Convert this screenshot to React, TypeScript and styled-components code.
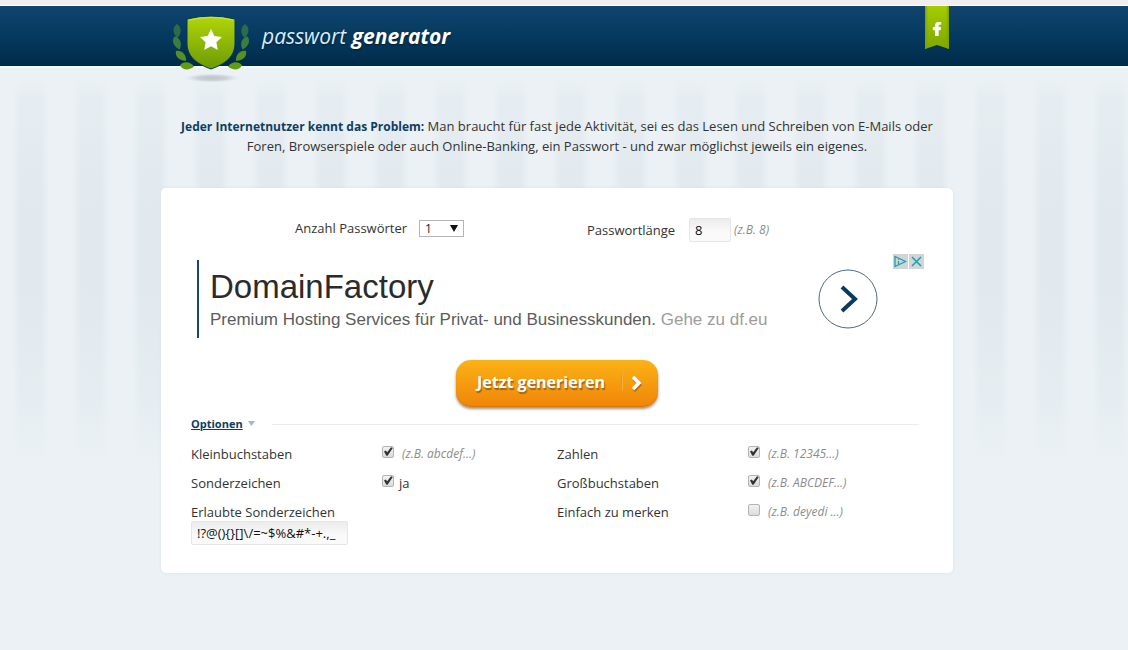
import React from "react";
import styled, { createGlobalStyle } from "styled-components";
import { FaFacebookF } from "react-icons/fa";

const bodyFont = `"Open Sans", "Noto Sans", sans-serif`;

const GlobalStyle = createGlobalStyle`
  * { box-sizing: border-box; }
  body {
    margin: 0;
    min-height: 100vh;
    background: #ebf1f5;
    color: #333;
    font: 13px/20px ${bodyFont};
  }
`;

const Page = styled.div`
  border-top: 5px solid #f0eeee;
`;

const Header = styled.header`
  height: 63px;
  padding-right: 14px;
  border-top: 1px solid #fff;
  border-bottom: 2px solid #f4f9fc;
  background: linear-gradient(#10446f, #053a60 50%, #002a48) padding-box;
`;

const HeaderInner = styled.div`
  display: flex;
  align-items: flex-start;
  justify-content: space-between;
  max-width: 792px;
  margin: 0 auto;
  padding: 0 4px 0 11px;
`;

const Brand = styled.a`
  display: flex;
  gap: 12px;
  color: #d8eefb;
  font-size: 21px;
  font-style: italic;
  line-height: 60px;
  text-decoration: none;
  text-shadow: 0 1px 2px #001b30;

  svg { margin-top: 8px; }
  b { color: #fff; }
`;

const Ribbon = styled.a`
  display: flex;
  justify-content: center;
  width: 24px;
  height: 43px;
  padding-top: 16px;
  color: #fff;
  background: linear-gradient(90deg, #7aa300, transparent 3px 21px, #7aa300),
    linear-gradient(#a5cc00, #7ea600);
  clip-path: polygon(0 0, 100% 0, 100% 100%, 50% 39px, 0 100%);
`;

const Main = styled.main`
  padding: 48px 14px 76px 0;
  background:
    linear-gradient(#ebf1f5 10px, #ebf1f580 30px, #ebf1f500 140px 220px, #ebf1f580 330px, #ebf1f5 400px),
    repeating-linear-gradient(90deg, #ebf1f5 0 12px, #e1e9ee 21px 41px, #ebf1f5 49px 60px);
`;

const Intro = styled.p`
  max-width: 792px;
  margin: 0 auto 32px;
  padding: 0 16px;
  text-align: center;

  strong {
    color: #0e3d63;
    font-size: 12px;
    line-height: 16px;
  }
`;

const Card = styled.form`
  max-width: 792px;
  margin: 0 auto;
  padding: 30px 30px 28px;
  border-radius: 5px;
  background: #fff;
  box-shadow: 0 0 3px #d9e3e8;
`;

const Settings = styled.div`
  display: grid;
  grid-template-columns: 292px auto;
  align-items: start;
  padding-left: 104px;
`;

const Setting = styled.div<{ $labelWidth: number }>`
  display: flex;
  align-items: center;

  label { flex: 0 0 ${(p) => p.$labelWidth}px; }
`;

const SelectBox = styled.span`
  position: relative;
  display: flex;

  svg {
    position: absolute;
    top: 5px;
    right: 6px;
    pointer-events: none;
  }
`;

const Select = styled.select`
  appearance: none;
  width: 45px;
  height: 17px;
  padding: 0 5px;
  border: 1px solid #b5b5b5;
  border-radius: 0;
  background: #fff;
  color: #222;
  font: 12px/15px ${bodyFont};
`;

const TextInput = styled.input<{ $width: number }>`
  width: ${(p) => p.$width}px;
  height: 24px;
  padding: 0 5px;
  border: 1px solid #e6e6e6;
  border-radius: 2px;
  background: linear-gradient(#ececec, #fafafa 60%);
  color: #111;
  font: 13px/20px ${bodyFont};
`;

const Hint = styled.span`
  padding-left: 3px;
  color: #8c8c8c;
  font-size: 12px;
  font-style: italic;
`;

const Ad = styled.section`
  display: flex;
  align-items: flex-start;
  margin: 12px -1px 22px 6px;
  font-family: "Liberation Sans", Arial, sans-serif;
`;

const AdLink = styled.a`
  display: flex;
  flex: 1;
  align-items: center;
  justify-content: space-between;
  height: 78px;
  margin: 6px 15px 0 0;
  padding-left: 11px;
  border-left: 2px solid #174868;
  color: #5c5c5c;
  font-size: 17px;
  text-decoration: none;
`;

const AdTitle = styled.span`
  display: block;
  margin-bottom: 4px;
  color: #2b2b2b;
  font-size: 33px;
  line-height: 38px;
`;

const AdDomain = styled.span`
  color: #9c9c9c;
`;

const AdTools = styled.div`
  display: flex;
  gap: 1px;
`;

const AdTool = styled.button`
  width: 15px;
  height: 15px;
  padding: 0;
  border: 0;
  background: #d2d5d5;

  svg { display: block; }
`;

const Generate = styled.button`
  display: flex;
  align-items: center;
  width: 202px;
  height: 47px;
  margin: 0 auto 7px;
  padding: 0 14px 3px 21px;
  border: 0;
  border-radius: 15px;
  background: linear-gradient(#fbb216, #f08509);
  box-shadow: 0 2px 3px #9a9080, inset 0 -1px 1px #d97800;
  color: #fff;
  font: bold 16px/24px ${bodyFont};
  text-shadow: 1px 2px 1px #9d6417;

  svg { margin-left: auto; }
`;

const OptionsHead = styled.div`
  display: flex;
  align-items: center;
  gap: 5px;
  margin-bottom: 5px;

  a {
    color: #0e3d63;
    font-size: 11px;
    font-weight: bold;
  }
`;

const Rule = styled.hr`
  flex: 1;
  height: 1px;
  margin: 0 4px 0 12px;
  border: 0;
  background: #ececec;
`;

const Options = styled.div`
  display: grid;
  grid-template-columns: 1fr 1fr;
`;

const Option = styled.div`
  display: grid;
  grid-template-columns: 191px auto 1fr;
  align-items: center;
  height: 29px;
`;

const Check = styled.input`
  appearance: none;
  width: 12px;
  height: 12px;
  margin: 0 5px 4px 0;
  border: 1px solid #b4b4b4;
  border-radius: 2px;
  background: linear-gradient(#f2f2f2, #dcdcdc);

  &:checked::before {
    content: "";
    display: block;
    height: 10px;
    background: #333;
    clip-path: polygon(10% 50%, 28% 40%, 42% 58%, 80% 8%, 98% 16%, 46% 92%, 34% 92%);
  }
`;

const AllowedField = styled.div`
  display: flex;
  flex-direction: column;
  align-items: flex-start;
  padding-top: 5px;

  label { height: 19px; }
`;

const leaves = [
  { x: 5, y: 17, angle: 80, fill: "#2f6b4a" },
  { x: 5, y: 29, angle: 60, fill: "#3c7d3c" },
  { x: 9, y: 42, angle: 35, fill: "#549022" },
  { x: 15, y: 52, angle: -4, fill: "#629c14" },
];

function Laurel() {
  return (
    <>
      {leaves.map(({ x, y, angle, fill }) => (
        <path
          key={y}
          d="M-7 -1C-4 -5 3 -5 7 1C3 4 -4 5 -7 -1Z"
          transform={`translate(${x} ${y}) rotate(${angle})`}
          fill={fill}
        />
      ))}
    </>
  );
}

function Emblem() {
  return (
    <svg width="78" height="70" viewBox="0 0 78 70" aria-hidden="true">
      <defs>
        <linearGradient id="shield" x2="0" y2="1">
          <stop stopColor="#b2d50a" />
          <stop offset="1" stopColor="#6c9a04" />
        </linearGradient>
        <radialGradient id="ground">
          <stop stopColor="#bcc4c9" />
          <stop offset=".5" stopColor="#cbd3d8" />
          <stop offset="1" stopColor="#e8eef2" stopOpacity="0" />
        </radialGradient>
      </defs>
      <ellipse cx="40" cy="64" rx="30" ry="5" fill="url(#ground)" />
      <Laurel />
      <g transform="translate(78 0) scale(-1 1)"><Laurel /></g>
      <path d="M15 5Q39 -1 63 5V29C63 43 53 50 39 55C25 50 15 43 15 29Z" fill="url(#shield)" stroke="#05375b" strokeWidth="1" />
      <path d="M17 6Q39 1 61 6" fill="none" stroke="#cce545" />
      <path d="M39 15l3.300 7 7.700 1-5.600 5.300 1.400 7.700-6.800-3.700-6.800 3.700 1.400-7.700-5.600-5.300 7.700-1z" fill="#fff" />
    </svg>
  );
}

type OptionProps = { id: string; label: string; hint?: string; text?: string; checked?: boolean };

function CheckOption({ id, label, hint, text, checked }: OptionProps) {
  return (
    <Option>
      <label htmlFor={id}>{label}</label>
      <Check id={id} type="checkbox" defaultChecked={checked} />
      {hint ? <Hint>{hint}</Hint> : <span>{text}</span>}
    </Option>
  );
}

export default function App() {
  return (
    <Page>
      <GlobalStyle />
      <Header>
        <HeaderInner>
          <Brand href="#">
            <Emblem />
            <span>passwort <b>generator</b></span>
          </Brand>
          <Ribbon href="#facebook" aria-label="Facebook">
            <FaFacebookF size={14} stroke="#fff" strokeWidth={30} />
          </Ribbon>
        </HeaderInner>
      </Header>
      <Main>
        <Intro>
          <strong>Jeder Internetnutzer kennt das Problem:</strong> Man braucht für fast jede
          Aktivität, sei es das Lesen und Schreiben von E-Mails oder Foren, Browserspiele oder
          auch Online-Banking, ein Passwort - und zwar möglichst jeweils ein eigenes.
        </Intro>
        <Card onSubmit={(e) => e.preventDefault()}>
          <Settings>
            <Setting $labelWidth={124}>
              <label htmlFor="count">Anzahl Passwörter</label>
              <SelectBox>
                <Select id="count">
                  <option>1</option>
                  <option>2</option>
                  <option>5</option>
                </Select>
                <svg width="8" height="7" aria-hidden="true"><path d="M0 0h8L4 7z" fill="#111" /></svg>
              </SelectBox>
            </Setting>
            <Setting $labelWidth={102}>
              <label htmlFor="length">Passwortlänge</label>
              <TextInput id="length" $width={42} defaultValue="8" />
              <Hint>(z.B. 8)</Hint>
            </Setting>
          </Settings>
          <Ad>
            <AdLink href="#ad">
              <span>
                <AdTitle>DomainFactory</AdTitle>
                Premium Hosting Services für Privat- und Businesskunden.{" "}
                <AdDomain>Gehe zu df.eu</AdDomain>
              </span>
              <svg width="60" height="60" fill="none" aria-hidden="true">
                <circle cx="30" cy="30" r="29" stroke="#4f6a7c" />
                <path d="M24 18l13 12-13 12" stroke="#0b3a60" strokeWidth="4" />
              </svg>
            </AdLink>
            <AdTools>
              <AdTool type="button" aria-label="AdChoices">
                <svg width="15" height="15" fill="none" stroke="#18a0b8" strokeWidth="1.3">
                  <path d="M2 2.500v10L12.500 7.500z" /><path d="M5.500 5v.8M5.500 7v3" />
                </svg>
              </AdTool>
              <AdTool type="button" aria-label="Anzeige schließen">
                <svg width="15" height="15" fill="none" stroke="#18a0b8" strokeWidth="1.500">
                  <path d="M3 3l9 9M12 3l-9 9" />
                </svg>
              </AdTool>
            </AdTools>
          </Ad>
          <Generate type="submit">
            Jetzt generieren
            <svg width="24" height="20" fill="none" aria-hidden="true">
              <path d="M1.500 2v16" stroke="#f0951a" />
              <path d="M2.500 2v16" stroke="#fbb03c" />
              <path d="M14 7l6 6-6 6" stroke="#b8700f" strokeWidth="3" />
              <path d="M13 5l6 6-6 6" stroke="#fff" strokeWidth="3.500" />
            </svg>
          </Generate>
          <OptionsHead>
            <a href="#optionen">Optionen</a>
            <svg width="7" height="6" aria-hidden="true"><path d="M0 0h7L3.500 5z" fill="#9cbccb" /></svg>
            <Rule />
          </OptionsHead>
          <Options id="optionen">
            <CheckOption id="lower" label="Kleinbuchstaben" hint="(z.B. abcdef...)" checked />
            <CheckOption id="digits" label="Zahlen" hint="(z.B. 12345...)" checked />
            <CheckOption id="special" label="Sonderzeichen" text="ja" checked />
            <CheckOption id="upper" label="Großbuchstaben" hint="(z.B. ABCDEF...)" checked />
            <AllowedField>
              <label htmlFor="allowed">Erlaubte Sonderzeichen</label>
              <TextInput id="allowed" $width={157} defaultValue="!?@(){}[]\/=~$%&#*-+.,_" />
            </AllowedField>
            <CheckOption id="easy" label="Einfach zu merken" hint="(z.B. deyedi ...)" />
          </Options>
        </Card>
      </Main>
    </Page>
  );
}
